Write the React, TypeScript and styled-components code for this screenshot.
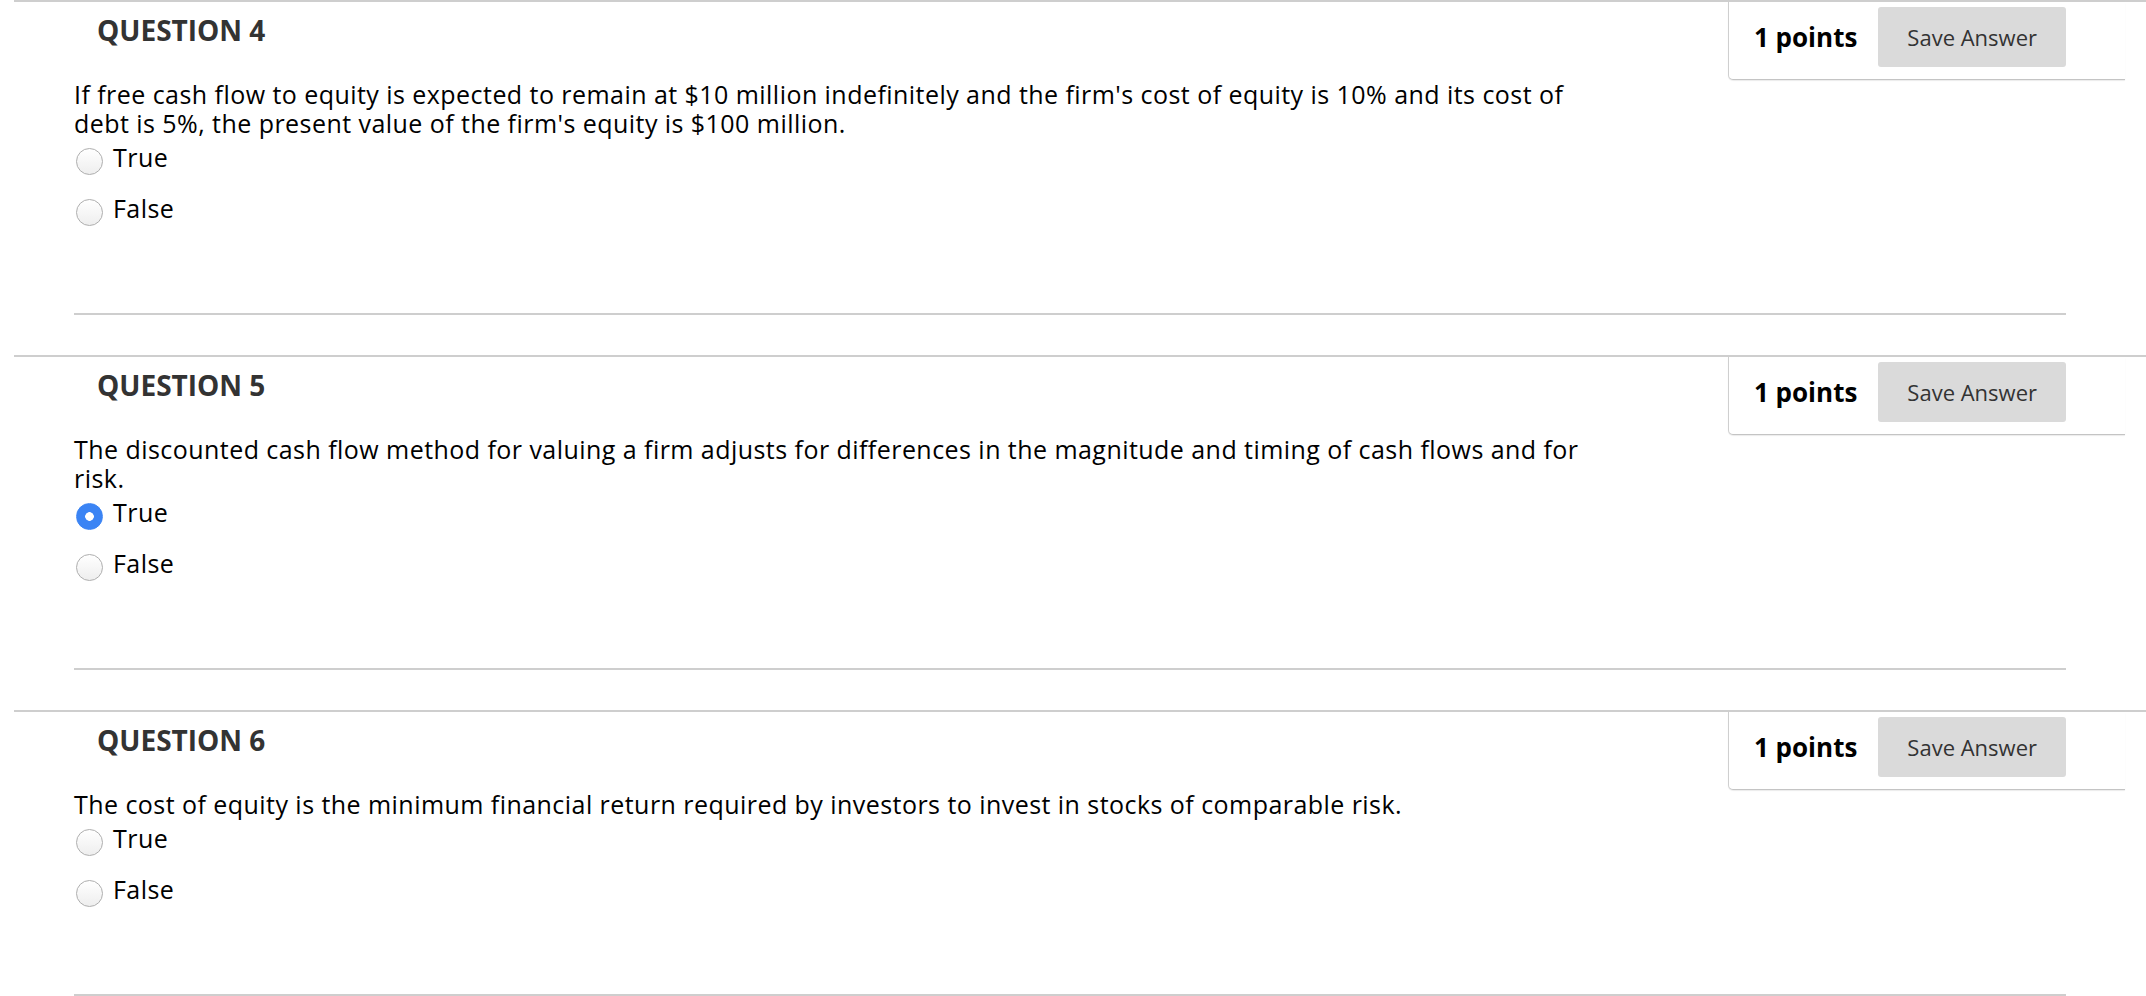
import React from 'react'
import styled, { createGlobalStyle } from 'styled-components'

const GlobalStyle = createGlobalStyle`
  html, body {
    margin: 0;
    padding: 0;
    background: #fff;
  }

  body {
    font-family: "Open Sans", "Liberation Sans", Arial, sans-serif;
    color: #000;
  }
`

const Page = styled.div`
  display: flex;
  flex-direction: column;
  width: 2146px;
`

const QuestionBlock = styled.section`
  margin-left: 14px;
  border-top: 2px solid #cecece;
`

const Header = styled.div`
  display: flex;
  justify-content: space-between;
  align-items: flex-start;
`

const Title = styled.h3`
  margin: 14px 0 0;
  padding-left: 83px;

  font-size: 28px;
  font-weight: 700;
  line-height: 28px;
  color: #333;
`

const PointsBox = styled.div`
  display: flex;
  align-items: center;
  gap: 21px;
  margin-right: 21px;
  padding: 5px 59px 12px 25px;

  background: #fff;
  border-left: 1px solid #cfcfcf;
  border-bottom: 1px solid #c4c4c4;
  border-bottom-left-radius: 5px;
  box-shadow: 0 1px 1px rgba(0, 0, 0, .08);
`

const Points = styled.span`
  font-size: 26px;
  font-weight: 700;
  color: #000;
`

const SaveButton = styled.button`
  height: 60px;
  padding: 0 29px;

  font-family: inherit;
  font-size: 22px;
  color: #333;

  background: #dadada;
  border: none;
  border-radius: 3px;
  cursor: pointer;
`

const Body = styled.div`
  padding-left: 60px;
`

const Prompt = styled.p`
  max-width: 1541px;
  margin: 0;

  font-size: 25px;
  letter-spacing: .45px;
  line-height: 29px;
  color: #000;
`

const Options = styled.div`
  display: flex;
  flex-direction: column;
  gap: 22px;
  margin-top: 5px;
`

const Option = styled.label`
  display: flex;
  align-items: flex-start;
  gap: 10px;
  height: 29px;

  font-size: 25px;
  letter-spacing: .45px;
  line-height: 29px;
  color: #000;
`

const Radio = styled.input.attrs({ type: 'radio' })`
  appearance: none;
  flex: none;
  width: 27px;
  height: 27px;
  margin: 5px 0 0 2px;

  background: linear-gradient(#fff, #eee);
  border: 1px solid #aeaeae;
  border-radius: 50%;

  &:checked {
    background: radial-gradient(circle, #fff 0 4px, #3b84f4 4.6px);
    border-color: #3b84f4;
  }
`

const Divider = styled.hr`
  height: 2px;
  margin: 90px 80px 40px 60px;

  background: #cecece;
  border: none;
`

interface QuestionProps {
  number: number
  text: string
  selected?: 'True' | 'False'
}

const Question = ({ number, text, selected }: QuestionProps) => (
  <QuestionBlock>
    <Header>
      <Title>QUESTION {number}</Title>
      <PointsBox>
        <Points>1 points</Points>
        <SaveButton type="button">Save Answer</SaveButton>
      </PointsBox>
    </Header>
    <Body>
      <Prompt>{text}</Prompt>
      <Options>
        {(['True', 'False'] as const).map((choice) => (
          <Option key={choice}>
            <Radio name={`q${number}`} defaultChecked={selected === choice} />
            {choice}
          </Option>
        ))}
      </Options>
    </Body>
    <Divider />
  </QuestionBlock>
)

const questions: QuestionProps[] = [
  {
    number: 4,
    text: "If free cash flow to equity is expected to remain at $10 million indefinitely and the firm's cost of equity is 10% and its cost of debt is 5%, the present value of the firm's equity is $100 million.",
  },
  {
    number: 5,
    text: 'The discounted cash flow method for valuing a firm adjusts for differences in the magnitude and timing of cash flows and for risk.',
    selected: 'True',
  },
  {
    number: 6,
    text: 'The cost of equity is the minimum financial return required by investors to invest in stocks of comparable risk.',
  },
]

const App = () => (
  <Page>
    <GlobalStyle />
    {questions.map((q) => (
      <Question key={q.number} {...q} />
    ))}
  </Page>
)

export default App
